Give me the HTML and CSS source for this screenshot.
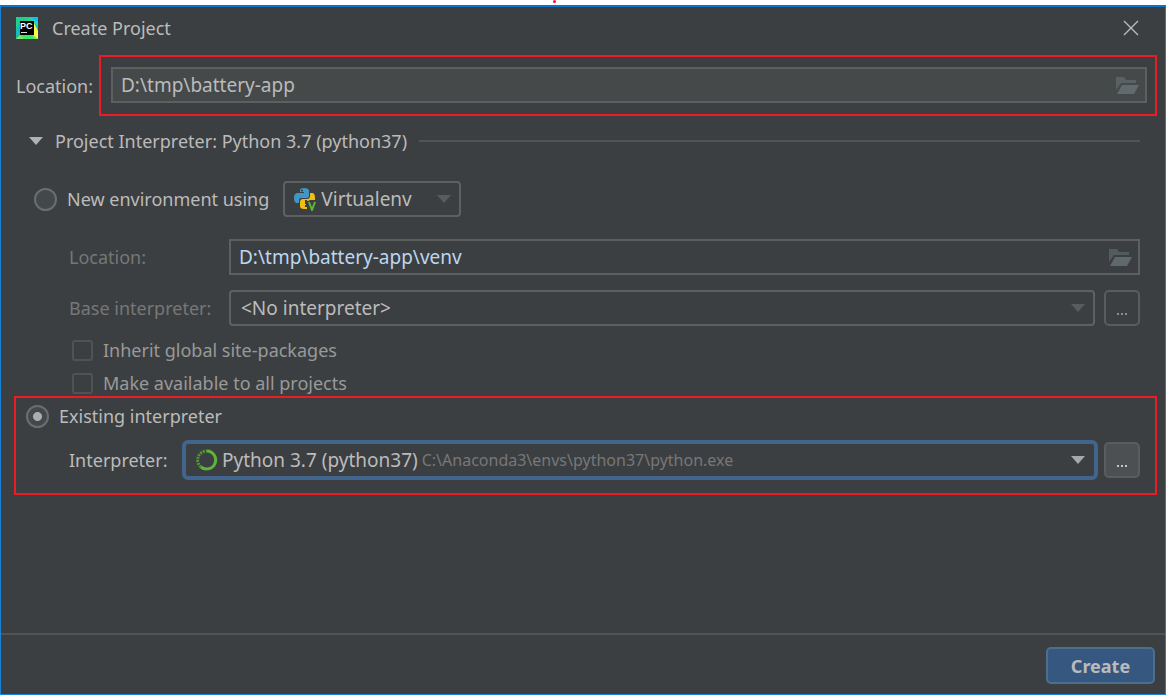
FILE: index.html
```html
<!DOCTYPE html>
<html lang="en">
<head>
<meta charset="utf-8">
<title>Create Project</title>
<link rel="stylesheet" href="styles.css">
</head>
<body>
<span class="marker" aria-hidden="true"></span>
<form class="dialog">
  <header class="titlebar">
    <svg class="app-icon" viewBox="0 0 22 22" aria-hidden="true">
      <rect width="22" height="22" fill="#21d789"/>
      <path d="M0 0H13L6 9L0 12Z" fill="#1fd08c"/>
      <path d="M13 0H22V13L17 6Z" fill="#07c3f2"/>
      <path d="M13 0L22 5V9L16 4Z" fill="#2bd8b5"/>
      <path d="M0 13L4 4L5 18L0 22Z" fill="#12bfb8"/>
      <path d="M17 4L22 14V22H17Z" fill="#fcf84a"/>
      <path d="M0 22L5 17L17 18L22 22Z" fill="#8be25a"/>
      <path d="M4 18H17L18 22H8Z" fill="#3bea62"/>
      <rect x="4" y="4" width="14" height="14" fill="#000"/>
      <text class="app-icon-text" x="4" y="12">PC</text>
      <rect x="5" y="15" width="6" height="1" fill="#ddd"/>
    </svg>
    <h1 class="title">Create Project</h1>
    <button class="close" type="button" aria-label="Close">
      <svg width="16" height="16" viewBox="0 0 16 16" aria-hidden="true"><path d="M1 1L15 15M15 1L1 15" stroke="#b9bbbc" stroke-width="1.4" fill="none"/></svg>
    </button>
  </header>

  <div class="project-location">
    <label for="location">Location:</label>
    <div class="callout">
      <div class="field field-muted">
        <input id="location" type="text" value="D:\tmp\battery-app">
        <button class="browse" type="button" aria-label="Browse">
          <svg width="24" height="18" viewBox="0 0 24 18" aria-hidden="true"><path d="M1 14V1H9L11 4H21V7H6Z" fill="#5a6164"/><path d="M7 9H24L19 18H2Z" fill="#616a6d"/></svg>
        </button>
      </div>
    </div>
  </div>

  <section class="interpreter">
    <h2 class="section-head">
      <svg width="14" height="8" viewBox="0 0 14 8" aria-hidden="true"><path d="M0 0H14L7 8Z" fill="#afb1b3"/></svg>
      Project Interpreter: Python 3.7 (python37)
    </h2>

    <div class="new-env">
      <input class="radio" id="env-new" type="radio" name="env">
      <label for="env-new">New environment using</label>
      <div class="combo combo-tool">
        <svg class="python" viewBox="0 0 24 24" aria-hidden="true">
          <path d="M7 5V3Q7 1 11 1Q16 1 16 4V9Q16 11 14 11H8Q6 11 6 13V16H4Q1 16 1 11Q1 6 5 6H11V5Z" fill="#4096c4"/>
          <circle cx="9" cy="3.5" r="1" fill="#3c3f41"/>
          <path d="M17 6H19Q22 6 22 11V13H17L15 16L14 13H12V17H13V18H12V20H14V22H11Q7 22 7 19V15Q7 12 10 12H14Q17 12 17 9Z" fill="#f2bd12"/>
          <path d="M15 14L19 24L23 14" fill="none" stroke="#3c3f41" stroke-width="4"/>
          <path d="M16 15L19 23L22 15" fill="none" stroke="#5fb53c" stroke-width="2"/>
        </svg>
        <select class="grow" aria-label="Environment tool"><option>Virtualenv</option></select>
        <svg class="arrow" viewBox="0 0 14 8" aria-hidden="true"><path d="M0 0H14L7 8Z" fill="#595b5c"/></svg>
      </div>
    </div>

    <div class="env-grid">
      <label class="disabled" for="venv">Location:</label>
      <div class="field">
        <input class="venv-path" id="venv" type="text" value="D:\tmp\battery-app\venv">
        <button class="browse" type="button" aria-label="Browse">
          <svg width="24" height="18" viewBox="0 0 24 18" aria-hidden="true"><path d="M1 14V1H9L11 4H21V7H6Z" fill="#545b5d"/><path d="M7 9H24L19 18H2Z" fill="#5f696b"/></svg>
        </button>
      </div>
      <label class="disabled" for="base">Base interpreter:</label>
      <div class="combo-row">
        <div class="combo">
          <select class="grow" id="base"><option>&lt;No interpreter&gt;</option></select>
          <svg class="arrow" viewBox="0 0 14 8" aria-hidden="true"><path d="M0 0H14L7 8Z" fill="#595b5c"/></svg>
        </div>
        <button class="more" type="button" aria-label="Choose base interpreter"><svg width="12" height="2" viewBox="0 0 12 2" aria-hidden="true"><path d="M0 0H2V2H0ZM4 0H6V2H4ZM8 0H10V2H8Z" fill="#8a8c8d"/></svg></button>
      </div>
    </div>

    <div class="checks">
      <label><input class="check" type="checkbox">Inherit global site-packages</label>
      <label><input class="check" type="checkbox">Make available to all projects</label>
    </div>
  </section>

  <section class="callout existing">
    <div class="existing-head">
      <input class="radio" id="env-existing" type="radio" name="env" checked>
      <label for="env-existing">Existing interpreter</label>
    </div>
    <div class="existing-row">
      <label for="interp">Interpreter:</label>
      <div class="combo-row">
        <div class="combo combo-focus">
          <svg class="conda" viewBox="0 0 22 22" aria-hidden="true">
            <path d="M11 2A9 9 0 1 1 5 18" fill="none" stroke="#5fb53c" stroke-width="3"/>
            <path d="M5 18A9 9 0 0 1 11 2" fill="none" stroke="#4f9a36" stroke-width="3" stroke-dasharray="2 1"/>
            <path d="M6 16A7 7 0 0 1 9 4" fill="none" stroke="#3c3f41" stroke-width="1" stroke-dasharray="1 2"/>
          </svg>
          <select class="fit" id="interp"><option>Python 3.7 (python37)</option></select>
          <span class="path">C:\Anaconda3\envs\python37\python.exe</span>
          <svg class="arrow" viewBox="0 0 14 8" aria-hidden="true"><path d="M0 0H14L7 8Z" fill="#a5a7a9"/></svg>
        </div>
        <button class="more more-active" type="button" aria-label="Choose interpreter"><svg width="12" height="2" viewBox="0 0 12 2" aria-hidden="true"><path d="M0 0H2V2H0ZM4 0H6V2H4ZM8 0H10V2H8Z" fill="#c4c6c7"/></svg></button>
      </div>
    </div>
  </section>

  <footer class="footer">
    <button class="create" type="submit">Create</button>
  </footer>
</form>
</body>
</html>
```
FILE: styles.css
```css
* {
  box-sizing: border-box;
}

body {
  margin: 0;
  padding-top: 5px;
  min-height: 100vh;
  display: flex;
  flex-direction: column;
  background: #fff;
  color: #bbb;
  font: 18px/26px "Noto Sans", "Open Sans", sans-serif;
}

input,
select,
button {
  margin: 0;
  padding: 0;
  border: 0;
  background: none;
  color: inherit;
  font: inherit;
  outline: none;
}

svg {
  display: block;
  flex: none;
}

label {
  white-space: nowrap;
}

.marker {
  position: absolute;
  top: 0;
  left: 553px;
  width: 3px;
  height: 3px;
  border-radius: 50%;
  background: #f01820;
}

.dialog {
  flex: 1;
  display: flex;
  flex-direction: column;
  border: 1px solid #1883d7;
  border-top: 2px solid #0a74cc;
  background: #3c3f41;
}

.titlebar {
  display: flex;
  align-items: center;
  gap: 14px;
  height: 42px;
  margin-bottom: 6px;
  padding: 0 26px 0 15px;
}

.app-icon {
  width: 22px;
  height: 22px;
}

.app-icon-text {
  fill: #fff;
  font: bold 9px "Liberation Sans", sans-serif;
}

.title {
  flex: 1;
  margin: 0;
  font-size: 18px;
  font-weight: 400;
}

.project-location {
  display: grid;
  grid-template-columns: 78px 1fr;
  align-items: center;
  gap: 5px;
  padding: 0 8px 0 15px;
}

.callout {
  border: 2px solid #ed1c24;
}

.project-location .callout {
  padding: 10px 8px 11px 10px;
}

.field {
  display: flex;
  align-items: center;
  height: 36px;
  padding: 0 6px 0 8px;
  border: 2px solid #5e6060;
  font-size: 19px;
}

.field-muted {
  background: #45494a;
}

.field input {
  flex: 1;
  min-width: 0;
}

.venv-path {
  color: #bcd6ee;
}

.interpreter {
  padding: 0 25px 0 28px;
}

.section-head {
  display: flex;
  align-items: center;
  gap: 12px;
  height: 50px;
  margin: 0 0 15px;
  font-size: 18px;
  font-weight: 400;
  white-space: nowrap;
}

.section-head::after {
  content: "";
  flex: 1;
  height: 2px;
  background: #515354;
}

.new-env {
  display: flex;
  align-items: center;
  padding-left: 5px;
  gap: 10px;
}

.radio {
  appearance: none;
  flex: none;
  width: 23px;
  height: 23px;
  border: 2px solid #6b6d6e;
  border-radius: 50%;
  background: #43494a;
}

.radio:checked {
  background: radial-gradient(circle, #adadad 0 4px, #43494a 5px);
}

.combo {
  display: flex;
  align-items: center;
  flex: 1;
  min-width: 0;
  height: 36px;
  padding: 0 8px 0 10px;
  border: 2px solid #5e6061;
  border-radius: 4px;
  font-size: 19px;
}

.combo select {
  appearance: none;
  min-width: 0;
}

.grow {
  flex: 1;
}

.fit {
  field-sizing: content;
}

.combo-tool {
  flex: 0 0 178px;
  margin-left: 4px;
  padding-left: 8px;
  gap: 4px;
}

.python {
  width: 24px;
  height: 24px;
}

.arrow {
  width: 14px;
  height: 8px;
  margin-left: auto;
}

.env-grid {
  display: grid;
  grid-template-columns: 150px 1fr;
  column-gap: 10px;
  row-gap: 15px;
  align-items: center;
  margin-top: 22px;
  padding-left: 40px;
}

.disabled {
  color: #777;
}

.combo-row {
  display: flex;
  align-items: center;
  flex: 1;
  gap: 9px;
}

.more {
  display: grid;
  place-items: end center;
  flex: none;
  width: 36px;
  height: 36px;
  padding: 0 0 9px 2px;
  border: 2px solid #5a5c5d;
  border-radius: 5px;
}

.more-active {
  background: #4c5052;
}

.checks {
  display: flex;
  flex-direction: column;
  gap: 7px;
  margin-top: 11px;
  padding-left: 43px;
  color: #999;
}

.checks label {
  display: flex;
  align-items: center;
  gap: 10px;
}

.check {
  appearance: none;
  width: 21px;
  height: 21px;
  border: 2px solid #505253;
  border-radius: 3px;
}

.existing {
  margin: 0 8px 0 13px;
  padding: 5px 15px 13px 10px;
}

.existing-head {
  display: flex;
  align-items: center;
  gap: 10px;
}

.existing-row {
  display: grid;
  grid-template-columns: 103px 1fr;
  gap: 10px;
  align-items: center;
  margin-top: 11px;
  padding-left: 43px;
}

.existing-row .combo-row {
  gap: 6px;
}

.combo-focus {
  height: 40px;
  padding: 0 9px 0 10px;
  gap: 4px;
  border: 4px solid #41658c;
  border-radius: 6px;
}

.conda {
  width: 22px;
  height: 22px;
}

.path {
  overflow: hidden;
  color: #777;
  font-size: 16px;
  white-space: nowrap;
}

.footer {
  display: flex;
  justify-content: flex-end;
  margin-top: auto;
  padding: 12px 10px 10px;
  border-top: 2px solid #515354;
}

.create {
  width: 109px;
  height: 37px;
  border: 2px solid #4c708c;
  border-radius: 5px;
  background: #365880;
  font-weight: 700;
}
```
